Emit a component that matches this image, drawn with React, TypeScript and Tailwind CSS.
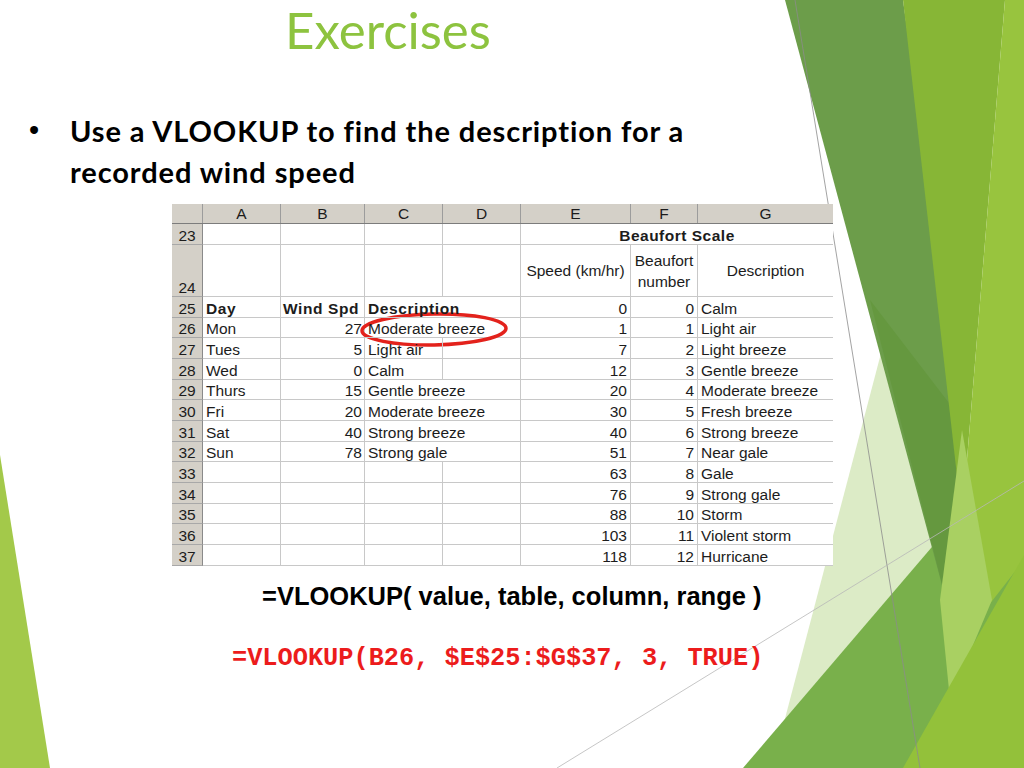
const GRID = 'border-[#c8c8c8]';

// column widths A..G (row header is 31px)
const colW = ['w-[78px]', 'w-[84px]', 'w-[78px]', 'w-[78px]', 'w-[110px]', 'w-[67px]', 'w-[135px]'];
const rowH = ['h-[21px]', 'h-[20px]', 'h-[21px]', 'h-[21px]', 'h-[20px]', 'h-[21px]', 'h-[21px]', 'h-[20px]', 'h-[21px]', 'h-[21px]', 'h-[20px]', 'h-[21px]', 'h-[21px]'];

const leftData: [string, string, string][] = [
  ['Day', 'Wind Spd', 'Description'],
  ['Mon', '27', 'Moderate breeze'],
  ['Tues', '5', 'Light air'],
  ['Wed', '0', 'Calm'],
  ['Thurs', '15', 'Gentle breeze'],
  ['Fri', '20', 'Moderate breeze'],
  ['Sat', '40', 'Strong breeze'],
  ['Sun', '78', 'Strong gale'],
  ['', '', ''],
  ['', '', ''],
  ['', '', ''],
  ['', '', ''],
  ['', '', ''],
];

const beaufort: [number, number, string][] = [
  [0, 0, 'Calm'],
  [1, 1, 'Light air'],
  [7, 2, 'Light breeze'],
  [12, 3, 'Gentle breeze'],
  [20, 4, 'Moderate breeze'],
  [30, 5, 'Fresh breeze'],
  [40, 6, 'Strong breeze'],
  [51, 7, 'Near gale'],
  [63, 8, 'Gale'],
  [76, 9, 'Strong gale'],
  [88, 10, 'Storm'],
  [103, 11, 'Violent storm'],
  [118, 12, 'Hurricane'],
];

const RowHead = ({ n }: { n: number }) => (
  <div className="w-[31px] shrink-0 bg-[#d4d0c8] border-r border-r-[#8a8a8a] border-b border-b-[#a8a8a8] flex items-end justify-center">
    {n}
  </div>
);

const Sheet = () => {
  return (
    <div className="ml-[172px] mt-[12px] w-[661px] bg-white font-['Liberation_Sans',Arial,sans-serif] text-[15.5px] leading-[16px] text-[#1c1c1c] relative">
      {/* column letters */}
      <div className="flex h-[20px] bg-[#d4d0c8] border-b border-[#7c7c7c]">
        <div className="w-[31px] shrink-0 border-r border-[#9c9c9c]" />
        {['A', 'B', 'C', 'D', 'E', 'F', 'G'].map((l, i) => (
          <div
            key={l}
            className={`${colW[i]} shrink-0 flex items-center justify-center ${i < 6 ? 'border-r border-[#9c9c9c]' : ''}`}
          >
            {l}
          </div>
        ))}
      </div>

      {/* row 23 */}
      <div className="flex h-[21px]">
        <RowHead n={23} />
        {[0, 1, 2, 3].map((i) => (
          <div key={i} className={`${colW[i]} shrink-0 border-r border-b ${GRID}`} />
        ))}
        <div className={`w-[312px] shrink-0 border-b ${GRID} flex items-end justify-center font-bold tracking-[0.5px]`}>
          Beaufort Scale
        </div>
      </div>

      {/* row 24 */}
      <div className="flex h-[52px]">
        <RowHead n={24} />
        {[0, 1, 2, 3].map((i) => (
          <div key={i} className={`${colW[i]} shrink-0 border-r border-b ${GRID}`} />
        ))}
        <div className={`w-[110px] shrink-0 border-r border-b ${GRID} flex items-center justify-center`}>
          Speed (km/hr)
        </div>
        <div className={`w-[67px] shrink-0 border-r border-b ${GRID} flex items-center justify-center text-center leading-[21px]`}>
          Beaufort
          <br />
          number
        </div>
        <div className={`w-[135px] shrink-0 border-b ${GRID} flex items-center justify-center`}>Description</div>
      </div>

      {/* rows 25 - 37 */}
      {leftData.map(([a, b, c], r) => {
        const head = r === 0;
        const spill = c.length > 9;
        const [e, f, g] = beaufort[r];
        return (
          <div key={r} className={`flex ${rowH[r]}`}>
            <RowHead n={25 + r} />
            <div className={`${colW[0]} shrink-0 border-r border-b ${GRID} flex items-end px-[3px] ${head ? 'font-bold tracking-[0.6px]' : ''}`}>
              {a}
            </div>
            <div className={`${colW[1]} shrink-0 border-r border-b ${GRID} flex items-end px-[2px] whitespace-nowrap ${head ? 'font-bold tracking-[0.6px] justify-start' : 'justify-end'}`}>
              {b}
            </div>
            <div className={`${colW[2]} shrink-0 border-b ${GRID} ${spill ? '' : 'border-r'} flex items-end px-[3px] whitespace-nowrap overflow-visible relative z-10 ${head ? 'font-bold tracking-[0.6px]' : ''}`}>
              {c}
            </div>
            <div className={`${colW[3]} shrink-0 border-r border-b ${GRID}`} />
            <div className={`${colW[4]} shrink-0 border-r border-b ${GRID} flex items-end justify-end px-[3px]`}>{e}</div>
            <div className={`${colW[5]} shrink-0 border-r border-b ${GRID} flex items-end justify-end px-[3px]`}>{f}</div>
            <div className={`${colW[6]} shrink-0 border-b ${GRID} flex items-end px-[3px] whitespace-nowrap`}>{g}</div>
          </div>
        );
      })}
    </div>
  );
};

const Backdrop = () => (
  <svg className="absolute inset-0 w-[1024px] h-[768px]" viewBox="0 0 1024 768">
    <polygon points="0,455 50,768 0,768" fill="#a3c94a" />
    <polygon points="895,300 968,640 772,768" fill="#dcebc6" />
    <polygon points="743,768 955,520 1024,440 1024,768" fill="#79b04b" />
    <polygon points="785,0 903,0 962,420 946,600" fill="#6c9d4a" />
    <polygon points="870,300 962,420 946,600" fill="#65983f" />
    <polygon points="903,0 1005,0 962,520" fill="#87b636" />
    <polygon points="1005,0 1024,0 1024,560 985,610 962,520" fill="#98c43e" />
    <polygon points="962,430 992,600 950,700 940,600" fill="#a9d062" />
    <polygon points="903,768 1024,555 1024,768" fill="#93c13a" />
    <line x1="795" y1="0" x2="920" y2="768" stroke="#8c8c8c" strokeWidth="0.8" />
    <line x1="557" y1="768" x2="1024" y2="481" stroke="#b8b8b8" strokeWidth="0.8" />
  </svg>
);

export default function App() {
  return (
    <div className="relative w-[1024px] h-[768px] overflow-hidden bg-white">
      <Backdrop />

      <div className="relative flex flex-col">
        <h1 className="pl-[285px] pt-[4px] h-[55px] font-['Lato',sans-serif] text-[51px] leading-[51px] text-[#8dc33f]">
          Exercises
        </h1>

        <div className="mt-[55px] flex font-['Lato',sans-serif] font-bold text-[29px] leading-[41px] tracking-[0.9px] text-black">
          <span className="w-[70px] shrink-0 pl-[29px] font-['Liberation_Sans',Arial,sans-serif] font-normal tracking-normal">•</span>
          <p>
            Use a VLOOKUP to find the description for a
            <br />
            recorded wind speed
          </p>
        </div>

        <Sheet />

        <p className="mt-[15px] pl-[262px] font-['Liberation_Sans',Arial,sans-serif] font-bold text-[25.5px] leading-[30px] text-black">
          =VLOOKUP( value, table, column, range )
        </p>
        <p className="mt-[33px] pl-[232px] font-['Liberation_Mono','Courier_New',monospace] font-bold text-[25.3px] leading-[30px] text-[#ec1c1c]">
          =VLOOKUP(B26, $E$25:$G$37, 3, TRUE)
        </p>
      </div>

      {/* red circle around the looked-up result */}
      <svg className="absolute left-[358px] top-[310px] w-[152px] h-[40px]" viewBox="0 0 152 40">
        <ellipse cx="76" cy="19.5" rx="72" ry="15.5" fill="none" stroke="#e3221c" strokeWidth="3.5" transform="rotate(-1 76 19.5)" />
      </svg>
    </div>
  );
}
